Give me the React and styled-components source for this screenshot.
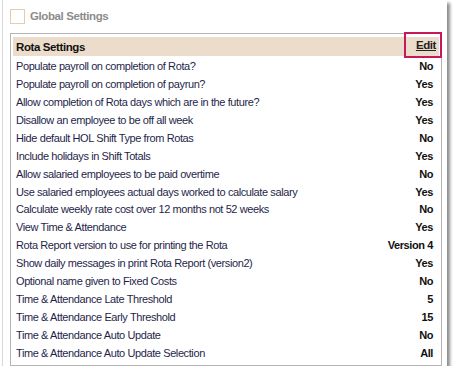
import React from "react";
import styled, { createGlobalStyle } from "styled-components";

const GlobalStyle = createGlobalStyle`
  html, body {
    margin: 0;
    padding: 0;
    background: #ffffff;
  }
  body {
    font-family: "Liberation Sans", Tahoma, Arial, sans-serif;
    letter-spacing: -0.4px;
  }
`;

const Frame = styled.div`
  box-sizing: border-box;
  width: 445px;
  height: 366px;
  margin-left: 2px;
  border-left: 1px solid #d9d9d9;
  background: #fff;
  box-shadow: 3px 3px 3px rgba(0, 0, 0, 0.45);
  padding: 8px 0 0 7px;
`;

const TitleBar = styled.div`
  display: flex;
  align-items: center;
  gap: 5px;
  height: 16px;
`;

const Check = styled.span`
  box-sizing: border-box;
  width: 15px;
  height: 15px;
  margin-top: 1px;
  border: 1px solid #e6cbb0;
  background: #fff;
`;

const Title = styled.span`
  font-size: 11.5px;
  font-weight: bold;
  color: #8c8c8c;
`;

const Panel = styled.div`
  box-sizing: border-box;
  margin-top: 9px;
  width: 432px;
  height: 333px;
  border: 1px solid #b4b4b4;
  padding: 3px 2px 0 2px;
`;

const Header = styled.div`
  display: flex;
  align-items: center;
  justify-content: space-between;
  height: 19px;
  background: #ecdccb;
  padding-left: 3px;
  position: relative;
`;

const HeaderTitle = styled.span`
  font-size: 11.5px;
  font-weight: bold;
  color: #111;
`;

const EditButton = styled.a`
  position: absolute;
  right: -3px;
  top: -5px;
  box-sizing: border-box;
  width: 38px;
  height: 26px;
  border: 2px solid #c8185a;
  display: flex;
  align-items: center;
  justify-content: flex-end;
  padding-right: 4px;
  font-size: 11.5px;
  font-weight: bold;
  color: #222;
  text-decoration: underline;
`;

const Rows = styled.div`
  display: flex;
  flex-direction: column;
  padding-top: 1px;
`;

const Row = styled.div`
  display: flex;
  justify-content: space-between;
  align-items: center;
  height: 17.94px;
  padding: 0 6px 0 3px;
  font-size: 11px;
`;

const Label = styled.span`
  color: #1f1f4a;
`;

const Value = styled.span`
  font-weight: bold;
  color: #111;
`;

const settings = [
  ["Populate payroll on completion of Rota?", "No"],
  ["Populate payroll on completion of payrun?", "Yes"],
  ["Allow completion of Rota days which are in the future?", "Yes"],
  ["Disallow an employee to be off all week", "Yes"],
  ["Hide default HOL Shift Type from Rotas", "No"],
  ["Include holidays in Shift Totals", "Yes"],
  ["Allow salaried employees to be paid overtime", "No"],
  ["Use salaried employees actual days worked to calculate salary", "Yes"],
  ["Calculate weekly rate cost over 12 months not 52 weeks", "No"],
  ["View Time & Attendance", "Yes"],
  ["Rota Report version to use for printing the Rota", "Version 4"],
  ["Show daily messages in print Rota Report (version2)", "Yes"],
  ["Optional name given to Fixed Costs", "No"],
  ["Time & Attendance Late Threshold", "5"],
  ["Time & Attendance Early Threshold", "15"],
  ["Time & Attendance Auto Update", "No"],
  ["Time & Attendance Auto Update Selection", "All"],
];

export default function App() {
  return (
    <>
      <GlobalStyle />
      <Frame>
        <TitleBar>
          <Check />
          <Title>Global Settings</Title>
        </TitleBar>
        <Panel>
          <Header>
            <HeaderTitle>Rota Settings</HeaderTitle>
            <EditButton href="#">Edit</EditButton>
          </Header>
          <Rows>
            {settings.map(([label, value]) => (
              <Row key={label}>
                <Label>{label}</Label>
                <Value>{value}</Value>
              </Row>
            ))}
          </Rows>
        </Panel>
      </Frame>
    </>
  );
}
